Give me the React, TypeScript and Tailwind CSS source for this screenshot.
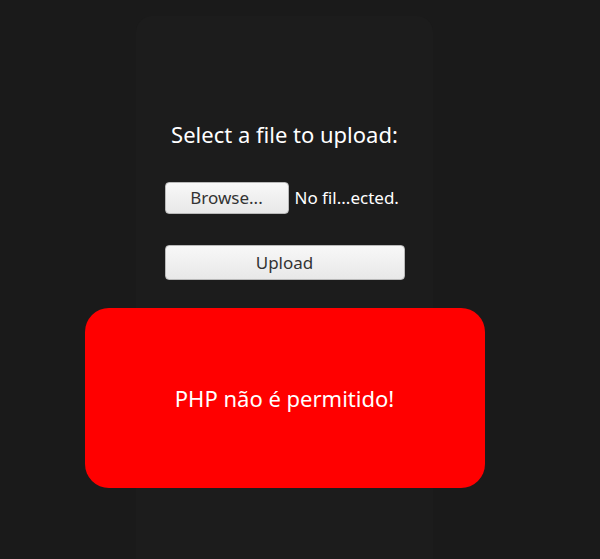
export default function App() {
  return (
    <div
      className="min-h-[559px] h-[559px] overflow-hidden bg-[#1a1a1a] text-white"
      style={{ fontFamily: '"Noto Sans", "Open Sans", sans-serif' }}
    >
      <div className="ml-[136px] mt-4 flex h-[620px] w-[297px] flex-col items-center rounded-2xl bg-[#1c1c1c] pt-[103px]">
        <h1 className="text-[22px] leading-[30px] text-white">Select a file to upload:</h1>

        <div className="mt-[33px] flex w-[240px] items-center gap-[6px]">
          <button className="h-[32px] w-[124px] rounded-[4px] border border-[#b9b9b9] bg-gradient-to-b from-[#f8f8f8] to-[#e8e8e8] text-[17px] text-[#333]">
            Browse...
          </button>
          <span className="text-[17px] text-white">No fil...ected.</span>
        </div>

        <button className="mt-[31px] h-[35px] w-[240px] rounded-[4px] border border-[#b9b9b9] bg-gradient-to-b from-[#f8f8f8] to-[#e8e8e8] text-[17px] text-[#333]">
          Upload
        </button>

        <div className="mt-[28px] flex h-[180px] w-[400px] shrink-0 items-center justify-center rounded-[24px] bg-[#ff0000]">
          <p className="text-[22px] text-white">PHP não é permitido!</p>
        </div>
      </div>
    </div>
  );
}
